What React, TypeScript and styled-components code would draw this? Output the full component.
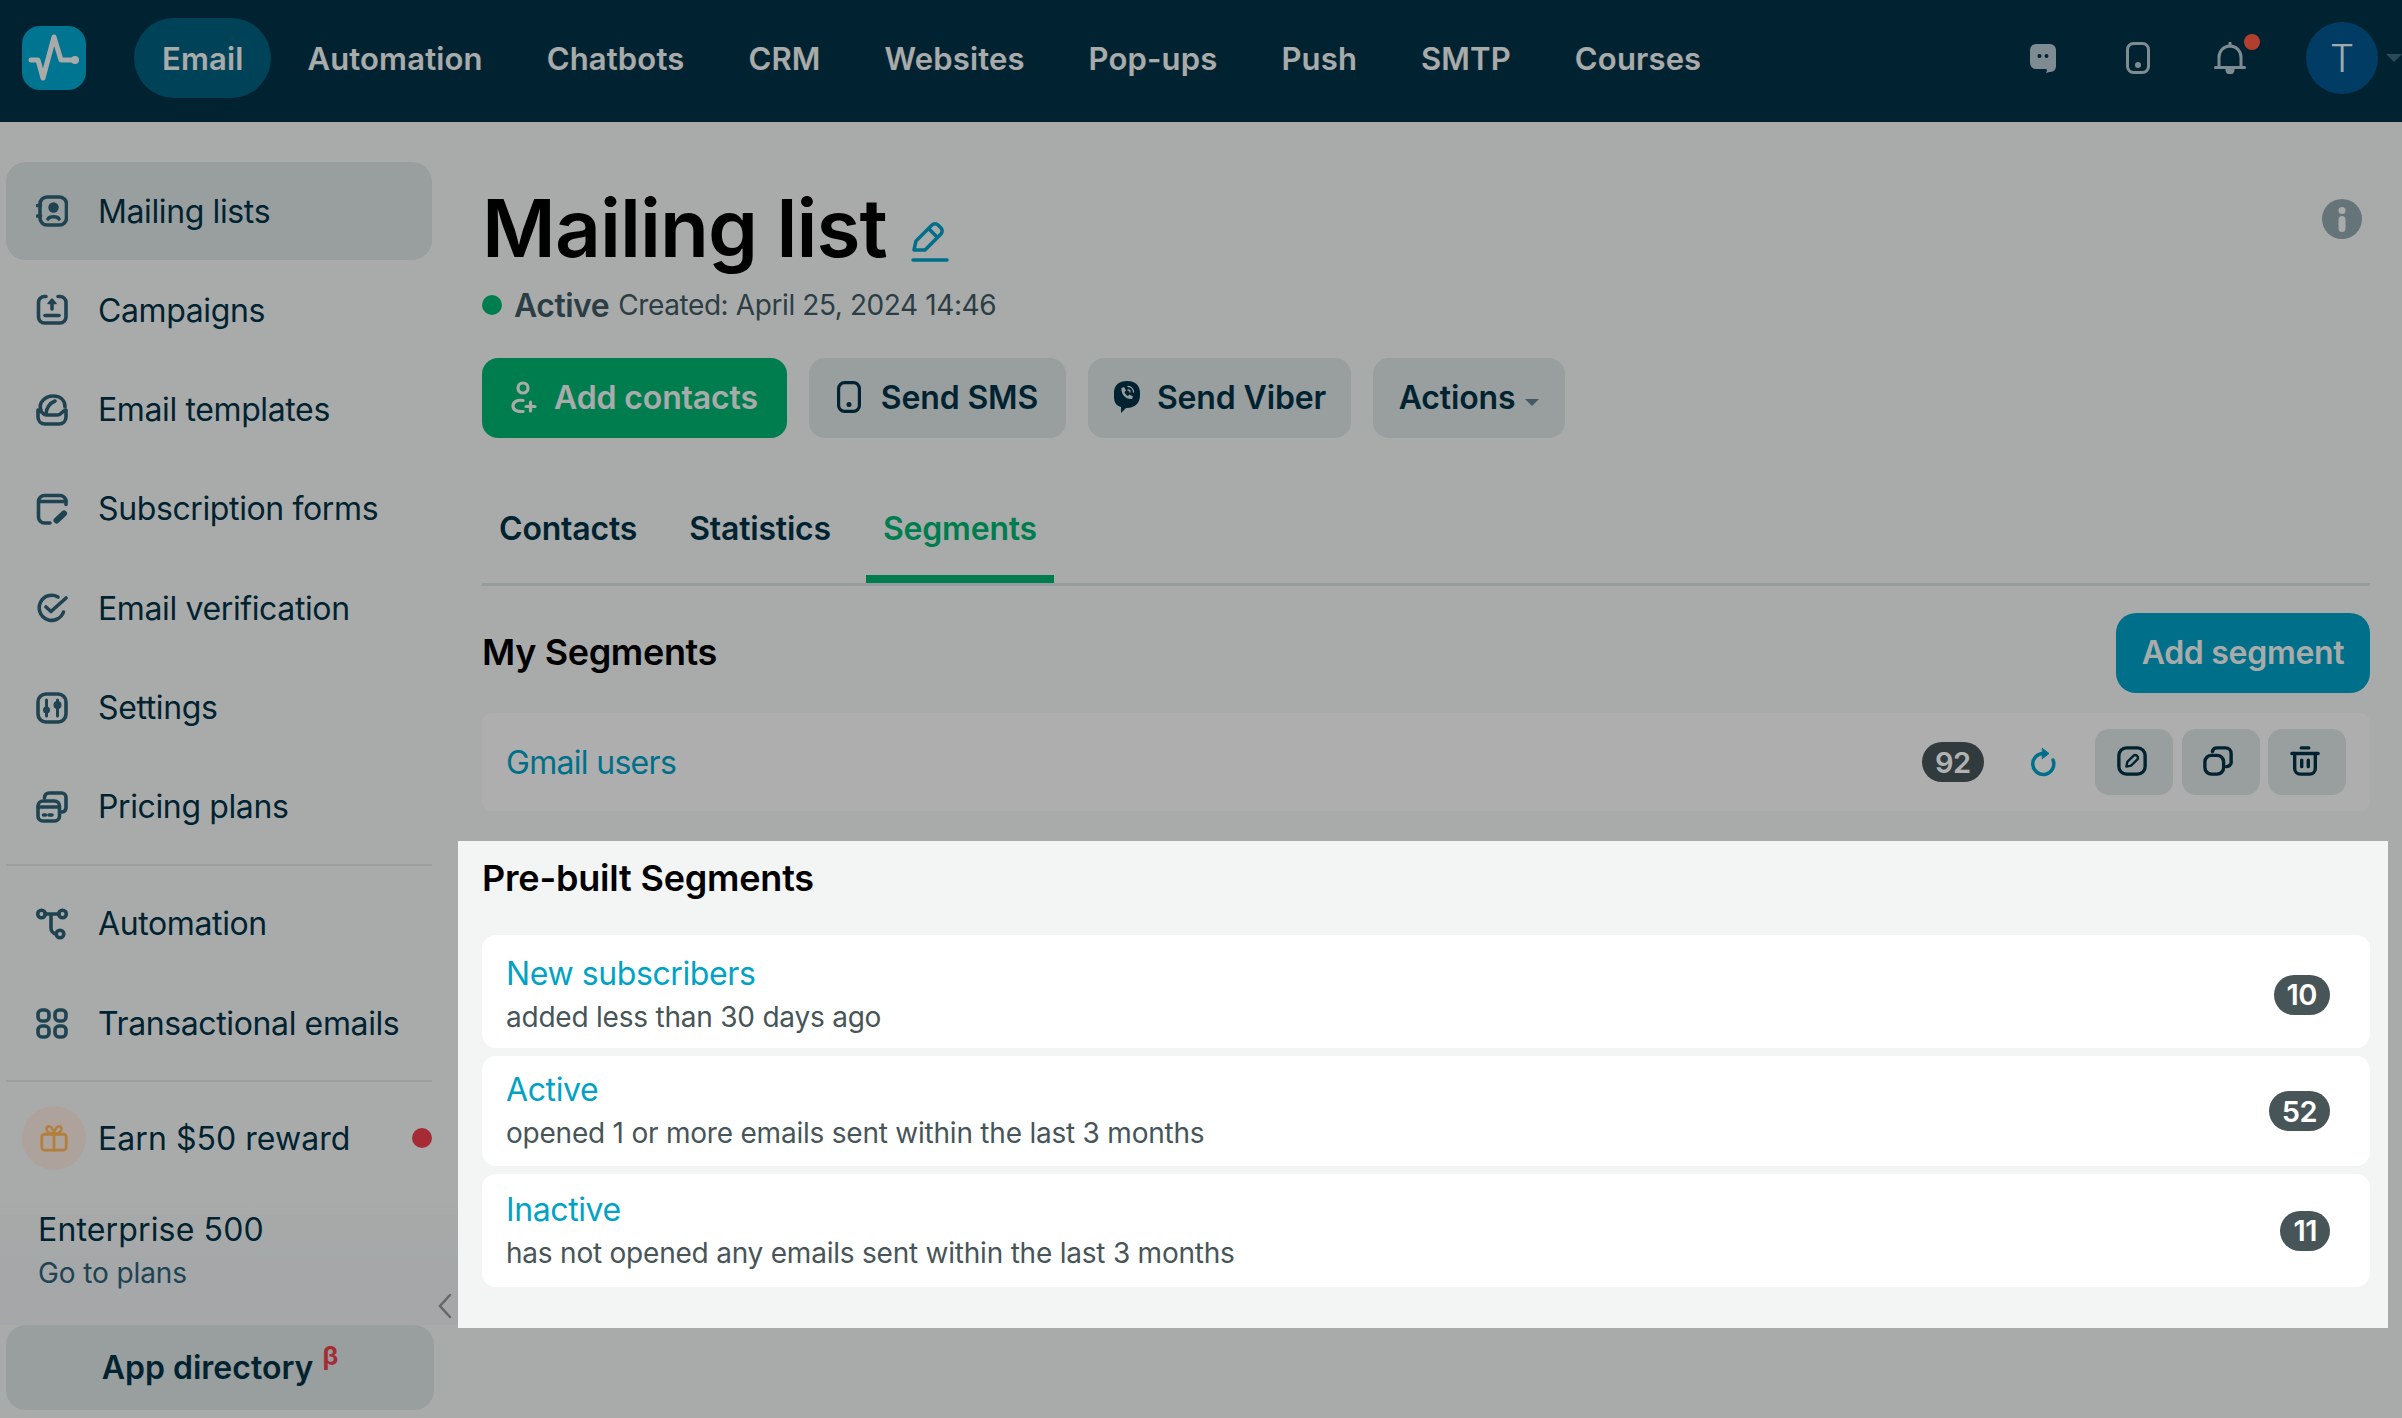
import { FC, ReactNode } from "react";
import styled, { createGlobalStyle } from "styled-components";

const GlobalStyle = createGlobalStyle`
  html, body {
    margin: 0;
    padding: 0;
    background: #f3f5f4;
    overflow: hidden;
  }
  * { box-sizing: border-box; }
  body { font-family: Inter, "Liberation Sans", sans-serif; color: #023347; }
`;

const Page = styled.div`
  width: 2402px;
  height: 1418px;
  overflow: hidden;
  position: relative;
  background: #f3f5f4;
`;

const TopBar = styled.header`
  height: 122px;
  background: #023347;
  display: flex;
  align-items: center;
  padding: 0 24px 6px 22px;
`;

const Logo = styled.div`
  width: 64px;
  height: 64px;
  border-radius: 18px;
  background: #00a8d0;
  margin-right: 48px;
  flex: none;
  svg { display: block; }
`;

const Nav = styled.nav`
  display: flex;
  gap: 8px;
  flex: 1;
`;

const NavLink = styled.a<{ $active?: boolean }>`
  height: 80px;
  padding: 0 28px;
  display: flex;
  align-items: center;
  border-radius: 40px;
  font-size: 31px;
  font-weight: 600;
  letter-spacing: 0.15px;
  color: #f3f5f4;
  background: ${(p) => (p.$active ? "#006080" : "transparent")};
`;

const TopIcons = styled.div`
  display: flex;
  align-items: center;
  color: #b6c8d1;
`;

const TopIcon = styled.span<{ $gap: number }>`
  position: relative;
  display: flex;
  margin-right: ${(p) => p.$gap}px;
`;

const NotifyDot = styled.i`
  position: absolute;
  top: -8px;
  right: -14px;
  width: 16px;
  height: 16px;
  border-radius: 50%;
  background: #ff5a42;
`;

const Avatar = styled.div`
  width: 72px;
  height: 72px;
  border-radius: 50%;
  background: #00578f;
  color: #eef2f4;
  font-size: 38px;
  font-weight: 300;
  display: flex;
  align-items: center;
  justify-content: center;
  margin-right: 8px;
`;

const Caret = styled.i`
  width: 0;
  height: 0;
  border-left: 8px solid transparent;
  border-right: 8px solid transparent;
  border-top: 8px solid #3d6b80;
  margin-right: -24px;
`;

const Body = styled.div`
  display: grid;
  grid-template-columns: 458px 1fr;
  height: 1296px;
`;

const Sidebar = styled.aside`
  position: relative;
  padding: 40px 0 0 6px;
  display: flex;
  flex-direction: column;
`;

const MenuGroup = styled.div`
  display: flex;
  flex-direction: column;
  gap: 1.33px;
  width: 426px;
`;

const MenuItem = styled.a<{ $active?: boolean }>`
  height: 98px;
  display: flex;
  align-items: center;
  gap: 30px;
  padding-left: 30px;
  border-radius: 20px;
  font-size: 32px;
  color: #023347;
  letter-spacing: -0.38px;
  background: ${(p) => (p.$active ? "#dce3e2" : "transparent")};
  svg { color: #2d6175; flex: none; }
`;

const Divider = styled.div<{ $top: number; $bottom: number }>`
  width: 426px;
  height: 2px;
  background: #dfe3e2;
  margin: ${(p) => p.$top}px 0 ${(p) => p.$bottom}px;
`;

const Reward = styled.a`
  display: flex;
  align-items: center;
  width: 426px;
  height: 64px;
  padding-left: 16px;
  margin-top: 24px;
  font-size: 32px;
  letter-spacing: 0.05px;
  color: #023347;
`;

const GiftCircle = styled.span`
  width: 64px;
  height: 64px;
  border-radius: 50%;
  background: #f9e9e0;
  color: #ffb657;
  display: flex;
  align-items: center;
  justify-content: center;
  margin-right: 12px;
`;

const RedDot = styled.i`
  width: 20px;
  height: 20px;
  border-radius: 50%;
  background: #ed3f4d;
  margin-left: auto;
`;

const PlanBox = styled.div`
  margin: 16px 0 0 -6px;
  padding: 24px 0 0 38px;
  height: 139px;
  background: linear-gradient(180deg, #f3f5f4 0%, #ecf0f2 60%);
`;

const PlanName = styled.div`
  font-size: 32px;
  letter-spacing: 0.15px;
  line-height: 40px;
  color: #023347;
`;

const PlanLink = styled.div`
  font-size: 28px;
  line-height: 40px;
  margin-top: 3px;
  letter-spacing: -0.1px;
  color: #2d6175;
`;

const Collapse = styled.span`
  position: absolute;
  right: 6px;
  top: 1171px;
  display: flex;
  color: #919593;
`;

const AppDirectory = styled.a`
  width: 428px;
  height: 85px;
  border-radius: 20px;
  background: #dce3e2;
  display: flex;
  align-items: center;
  justify-content: center;
  font-size: 32px;
  font-weight: 600;
  letter-spacing: 0;
  color: #023347;
  sup {
    color: #ed3f4d;
    font-size: 26px;
    font-weight: 700;
    margin: -24px 0 0 9px;
  }
`;

const Main = styled.main`
  padding: 58px 32px 0 24px;
  min-width: 0;
`;

const TitleRow = styled.div`
  display: flex;
  align-items: flex-start;
  height: 96px;
`;

const Title = styled.h1`
  margin: 0;
  font-size: 80px;
  line-height: 96px;
  font-weight: 600;
  letter-spacing: -0.9px;
  color: #000;
`;

const EditLink = styled.a`
  display: flex;
  color: #00a0c4;
  margin: 40px 0 0 24px;
`;

const InfoIcon = styled.span`
  margin: 19px 8px 0 auto;
  display: flex;
  color: #90a7ae;
`;

const StatusRow = styled.div`
  display: flex;
  align-items: center;
  height: 40px;
  margin-top: 9px;
  font-size: 28px;
  letter-spacing: -0.4px;
  color: #3f5a63;
`;

const StatusDot = styled.i`
  width: 20px;
  height: 20px;
  border-radius: 50%;
  background: #00b472;
  margin-right: 12px;
`;

const StatusText = styled.b`
  font-size: 32px;
  font-weight: 600;
  margin-right: 9px;
  letter-spacing: -0.5px;
`;

const ButtonRow = styled.div`
  display: flex;
  gap: 22px;
  margin-top: 33px;
`;

const Button = styled.a<{ $primary?: boolean; $w: number; $gap?: number }>`
  width: ${(p) => p.$w}px;
  height: 80px;
  padding-bottom: 2px;
  border-radius: 16px;
  display: flex;
  align-items: center;
  justify-content: center;
  gap: ${(p) => p.$gap ?? 16}px;
  font-size: 32px;
  font-weight: 600;
  letter-spacing: -0.15px;
  color: ${(p) => (p.$primary ? "#f3f5f4" : "#023347")};
  background: ${(p) => (p.$primary ? "#00b472" : "#dce3e2")};
`;

const SmallCaret = styled.i`
  width: 0;
  height: 0;
  border-left: 7px solid transparent;
  border-right: 7px solid transparent;
  border-top: 7px solid #62808c;
  margin: 10px 0 0 -6px;
`;

const Tabs = styled.div`
  display: flex;
  gap: 18px;
  height: 148px;
  padding-top: 32px;
  border-bottom: 3px solid #d7dfde;
`;

const Tab = styled.a<{ $active?: boolean }>`
  padding: 12px 17px 0;
  height: 113px;
  display: flex;
  align-items: center;
  font-size: 32px;
  font-weight: 600;
  letter-spacing: -0.2px;
  color: ${(p) => (p.$active ? "#00b472" : "#023347")};
  border-bottom: 8px solid ${(p) => (p.$active ? "#00b472" : "transparent")};
`;

const SectionHead = styled.div`
  display: flex;
  align-items: center;
  justify-content: space-between;
  height: 80px;
  margin-top: 27px;
`;

const SectionTitle = styled.h2`
  margin: 0 0 2px;
  font-size: 36px;
  font-weight: 600;
  letter-spacing: -0.35px;
  color: #000;
`;

const AddSegment = styled.a`
  width: 254px;
  height: 80px;
  padding-bottom: 2px;
  border-radius: 20px;
  background: #00a0c4;
  color: #f3f5f4;
  display: flex;
  align-items: center;
  justify-content: center;
  font-size: 32px;
  font-weight: 600;
  letter-spacing: -0.3px;
`;

const SegmentRow = styled.div`
  height: 98px;
  margin-top: 20px;
  padding: 0 24px;
  background: #fafafa;
  border-radius: 10px;
  display: flex;
  align-items: center;
`;

const SegmentLink = styled.a`
  font-size: 32px;
  letter-spacing: -0.7px;
  color: #00a0c4;
  margin-right: auto;
`;

const Count = styled.span`
  min-width: 40px;
  height: 40px;
  padding: 0 13px;
  border-radius: 20px;
  background: #475558;
  color: #fff;
  font-size: 29px;
  font-weight: 600;
  letter-spacing: -0.5px;
  display: flex;
  align-items: center;
  justify-content: center;
`;

const RefreshBtn = styled.span`
  margin: 0 31px 0 46px;
  display: flex;
  color: #00a0c4;
`;

const ActionBtn = styled.a`
  width: 78px;
  height: 66px;
  padding: 0 5px 2px 0;
  border-radius: 14px;
  background: #dce3e2;
  color: #023347;
  display: flex;
  align-items: center;
  justify-content: center;
  margin-left: 8.5px;
`;

const Prebuilt = styled.section`
  position: relative;
  width: 1930px;
  height: 487px;
  margin: 30px 0 0 -24px;
  padding: 12px 18px 0 24px;
  background: #f3f5f4;
`;

const Spotlight = styled.div`
  position: absolute;
  inset: 0;
  z-index: 10;
  pointer-events: none;
  box-shadow: 0 0 0 4000px rgba(0, 0, 0, 0.3);
`;

const PrebuiltTitle = styled(SectionTitle)`
  line-height: 50px;
  letter-spacing: -0.2px;
  margin: 0;
`;

const PrebuiltList = styled.div`
  display: flex;
  flex-direction: column;
  gap: 8px;
  margin-top: 32px;
`;

const PrebuiltRow = styled.div<{ $h: number }>`
  height: ${(p) => p.$h}px;
  background: #fff;
  border-radius: 14px;
  padding: 0 40px 0 24px;
  display: flex;
  align-items: center;
  justify-content: space-between;
  &:first-child { padding-top: 6px; }
`;

const RowName = styled.div`
  font-size: 32px;
  line-height: 42px;
  letter-spacing: -0.4px;
  color: #00a3c6;
`;

const RowDesc = styled.div`
  font-size: 28px;
  line-height: 40px;
  margin-top: 2px;
  letter-spacing: -0.22px;
  color: #475558;
`;

type IconProps = { size?: number; children: ReactNode };
const Ico: FC<IconProps> = ({ size = 32, children }) => (
  <svg width={size} height={size} viewBox="0 0 32 32" fill="none" stroke="currentColor" strokeWidth="3.6" strokeLinecap="round" strokeLinejoin="round">
    {children}
  </svg>
);

const menuTop = [
  {
    label: "Mailing lists",
    active: true,
    icon: (
      <>
        <rect x="4" y="2" width="26.500" height="28" rx="7" />
        <path d="M1.500 10.500h3M1.500 21h3" />
        <circle cx="17.500" cy="12.500" r="5.200" fill="currentColor" stroke="none" />
        <path d="M12 24c1.500-3 9.500-3 11 0" />
      </>
    ),
  },
  {
    label: "Campaigns",
    icon: (
      <>
        <path d="M10 2.500H8.500a6 6 0 0 0-6 6V23a6 6 0 0 0 6 6H24a6 6 0 0 0 6-6V8.500a6 6 0 0 0-6-6h-2" />
        <path d="M16 15V7" />
        <path d="M12 9.500L16 5l4 4.500z" fill="currentColor" strokeWidth="1.500" />
        <path d="M9 21.500h14" />
      </>
    ),
  },
  {
    label: "Email templates",
    icon: (
      <>
        <path d="M2 16v7c0 4 3 7 7 7h14c4 0 7-3 7-7v-7c-3 0-5 5-8 5H10c-3 0-5-5-8-5z" />
        <path d="M5 16C2 9 9 2 17 2c7 0 12 4 12 11" />
        <path d="M10 20c0-6 4-11 9-13" />
      </>
    ),
  },
  {
    label: "Subscription forms",
    icon: (
      <>
        <path d="M14 30H8.500a6 6 0 0 1-6-6V8.500a6 6 0 0 1 6-6H24a6 6 0 0 1 6 6v3" />
        <path d="M3 8.500h27" />
        <path d="M20.500 27.500L28 20.500" strokeWidth="6" />
      </>
    ),
  },
  {
    label: "Email verification",
    icon: (
      <>
        <path d="M22 5A12.500 12.500 0 1 0 27.500 20" />
        <path d="M10 15l5 4.500L30 6" />
      </>
    ),
  },
  {
    label: "Settings",
    icon: (
      <>
        <rect x="2" y="2" width="28" height="28" rx="8" />
        <path d="M10.500 8v16M21.500 8v16" strokeWidth="3" />
        <circle cx="10.500" cy="18" r="3.500" fill="currentColor" stroke="none" />
        <circle cx="21.500" cy="13" r="4" fill="currentColor" stroke="none" />
      </>
    ),
  },
  {
    label: "Pricing plans",
    icon: (
      <>
        <rect x="2" y="10" width="21.500" height="20" rx="5" />
        <path d="M8.500 7V6.500a4.500 4.500 0 0 1 4.500-4.500h12.500A4.500 4.500 0 0 1 30 6.500V17a4.500 4.500 0 0 1-4 4" />
        <path d="M2 16h21M7.500 24h2M13 24h3" />
      </>
    ),
  },
];

const menuBottom = [
  {
    label: "Automation",
    icon: (
      <>
        <circle cx="5.500" cy="6" r="3.800" />
        <circle cx="26.500" cy="6" r="3.800" />
        <circle cx="24" cy="26" r="3.800" />
        <path d="M9 6h14M15 6v14a6 6 0 0 0 5 6" />
      </>
    ),
  },
  {
    label: "Transactional emails",
    icon: (
      <>
        <rect x="2" y="3" width="11" height="11" rx="4" />
        <rect x="19" y="3" width="11" height="11" rx="4" />
        <rect x="2" y="19" width="11" height="11" rx="4" />
        <rect x="19" y="19" width="11" height="11" rx="4" />
      </>
    ),
  },
];

const prebuilt = [
  { name: "New subscribers", desc: "added less than 30 days ago", count: 10, h: 113 },
  { name: "Active", desc: "opened 1 or more emails sent within the last 3 months", count: 52, h: 110 },
  { name: "Inactive", desc: "has not opened any emails sent within the last 3 months", count: 11, h: 113 },
];

const navItems = ["Automation", "Chatbots", "CRM", "Websites", "Pop-ups", "Push", "SMTP", "Courses"];

export default function App() {
  return (
    <Page>
      <GlobalStyle />
      <TopBar>
        <Logo>
          <svg width="64" height="64" viewBox="0 0 64 64" fill="none" stroke="#f3f5f4" strokeWidth="5" strokeLinejoin="round" strokeLinecap="round">
            <path d="M9 34h7l5 18 11-41 7 23h13" />
            <circle cx="53" cy="34" r="4" fill="#f3f5f4" stroke="none" />
          </svg>
        </Logo>
        <Nav>
          <NavLink $active>Email</NavLink>
          {navItems.map((n) => (
            <NavLink key={n}>{n}</NavLink>
          ))}
        </Nav>
        <TopIcons>
          <TopIcon $gap={70}>
            <svg width="26" height="30" viewBox="0 0 26 30">
              <path d="M6 1h14a6 6 0 0 1 6 6v16c0 3-2 6-6 6-1 0-2 .5-4 1 1-1 1-3 .5-4H6a6 6 0 0 1-6-6V7a6 6 0 0 1 6-6z" fill="currentColor" />
              <circle cx="9.500" cy="13" r="2" fill="#023347" />
              <circle cx="16.500" cy="13" r="2" fill="#023347" />
            </svg>
          </TopIcon>
          <TopIcon $gap={64}>
            <svg width="24" height="32" viewBox="0 0 24 32" fill="none" stroke="currentColor" strokeWidth="3">
              <rect x="1.500" y="1.500" width="21" height="29" rx="6" />
              <circle cx="12" cy="23" r="3" fill="currentColor" stroke="none" />
            </svg>
          </TopIcon>
          <TopIcon $gap={60}>
            <svg width="32" height="32" viewBox="0 0 32 32" fill="none" stroke="currentColor" strokeWidth="3" strokeLinecap="round">
              <path d="M5 25V15a11 11 0 0 1 22 0v10" />
              <path d="M1.500 25.500h29M16 1v3" />
              <path d="M13 28h6a3 3 0 0 1-6 0z" fill="currentColor" />
            </svg>
            <NotifyDot />
          </TopIcon>
          <Avatar>T</Avatar>
          <Caret />
        </TopIcons>
      </TopBar>
      <Body>
        <Sidebar>
          <MenuGroup>
            {menuTop.map((m) => (
              <MenuItem key={m.label} $active={m.active}>
                <Ico>{m.icon}</Ico>
                {m.label}
              </MenuItem>
            ))}
          </MenuGroup>
          <Divider $top={8} $bottom={9} />
          <MenuGroup>
            {menuBottom.map((m) => (
              <MenuItem key={m.label}>
                <Ico>{m.icon}</Ico>
                {m.label}
              </MenuItem>
            ))}
          </MenuGroup>
          <Divider $top={8} $bottom={0} />
          <Reward>
            <GiftCircle>
              <Ico size={30}>
                <rect x="3" y="12" width="26" height="17" rx="3" strokeWidth="3" />
                <path d="M16 12v17" strokeWidth="3" />
                <path d="M16 11c-3 0-8 0-8-5 0-4 6-4 8 5zM16 11c3 0 8 0 8-5 0-4-6-4-8 5z" strokeWidth="2.500" />
              </Ico>
            </GiftCircle>
            Earn $50 reward
            <RedDot />
          </Reward>
          <PlanBox>
            <PlanName>Enterprise 500</PlanName>
            <PlanLink>Go to plans</PlanLink>
          </PlanBox>
          <AppDirectory>
            App directory<sup>β</sup>
          </AppDirectory>
          <Collapse>
            <svg width="14" height="26" viewBox="0 0 14 26" fill="none" stroke="currentColor" strokeWidth="2.500" strokeLinecap="round">
              <path d="M12 2L2 13l10 11" />
            </svg>
          </Collapse>
        </Sidebar>
        <Main>
          <TitleRow>
            <Title>Mailing list</Title>
            <EditLink>
              <svg width="38" height="42" viewBox="0 0 38 42" fill="none" stroke="currentColor" strokeWidth="3.500" strokeLinecap="round" strokeLinejoin="round">
                <path d="M3 30l2-9L21 5a4.500 4.500 0 0 1 6 0l3 3a4.500 4.500 0 0 1 0 6L14 30z" />
                <path d="M18 9l8 8" />
                <path d="M2 40h34" />
              </svg>
            </EditLink>
            <InfoIcon>
              <svg width="40" height="40" viewBox="0 0 40 40">
                <circle cx="20" cy="20" r="20" fill="currentColor" />
                <circle cx="20" cy="11.500" r="3.500" fill="#f3f5f4" />
                <rect x="16.500" y="17" width="7" height="16" rx="3.500" fill="#f3f5f4" />
              </svg>
            </InfoIcon>
          </TitleRow>
          <StatusRow>
            <StatusDot />
            <StatusText>Active</StatusText>
            Created: April 25, 2024 14:46
          </StatusRow>
          <ButtonRow>
            <Button $primary $w={305} $gap={17}>
              <svg width="26" height="32" viewBox="0 0 26 32" fill="none" stroke="currentColor" strokeWidth="3.200" strokeLinecap="round">
                <circle cx="12" cy="7" r="5" />
                <path d="M12 19.500C6 18.500 2 21 2 25c0 4 4 6 10 5.500" />
                <path d="M15 25.500h9M19.500 21v9" />
              </svg>
              Add contacts
            </Button>
            <Button $w={257} $gap={20}>
              <svg width="24" height="32" viewBox="0 0 24 32" fill="none" stroke="currentColor" strokeWidth="3.200">
                <rect x="1.600" y="1.600" width="20.800" height="28.800" rx="6" />
                <circle cx="12" cy="23.500" r="2.500" fill="currentColor" stroke="none" />
              </svg>
              Send SMS
            </Button>
            <Button $w={263}>
              <svg width="28" height="34" viewBox="0 0 28 34">
                <path d="M14 1C6 1 1 5 1 13v4c0 6 3 9 7 10v6l5-5h1c8 0 13-5 13-13v-2C27 5 22 1 14 1z" fill="currentColor" />
                <path d="M8.500 8l2.500-1 2 3.500-1.500 1.500c.5 2 2 3.500 3.500 4l1.500-1.500 3.500 2-1 2.500c-5.500 1-11.500-5-10.500-11z" fill="#dce3e2" />
                <path d="M15 6.500c3 0 5.500 2.500 5.500 5.500M15 10c1.200 0 2 .8 2 2" fill="none" stroke="#dce3e2" strokeWidth="1.300" strokeLinecap="round" />
              </svg>
              Send Viber
            </Button>
            <Button $w={192}>
              Actions
              <SmallCaret />
            </Button>
          </ButtonRow>
          <Tabs>
            <Tab>Contacts</Tab>
            <Tab>Statistics</Tab>
            <Tab $active>Segments</Tab>
          </Tabs>
          <SectionHead>
            <SectionTitle>My Segments</SectionTitle>
            <AddSegment>Add segment</AddSegment>
          </SectionHead>
          <SegmentRow>
            <SegmentLink>Gmail users</SegmentLink>
            <Count>92</Count>
            <RefreshBtn>
              <svg width="26" height="30" viewBox="0 0 26 30" fill="none" stroke="currentColor" strokeWidth="3.500" strokeLinecap="round">
                <path d="M14 6.500A10.500 10.500 0 1 0 23 13" />
                <path d="M12.500 1.500L19 6.500l-6.500 5z" fill="currentColor" strokeWidth="1" strokeLinejoin="round" />
              </svg>
            </RefreshBtn>
            <ActionBtn>
              <Ico size={30}>
                <rect x="2" y="2" width="28" height="28" rx="8" />
                <path d="M10 22l1-5 7-7a3 3 0 0 1 4 4l-7 7z" strokeWidth="2.500" />
              </Ico>
            </ActionBtn>
            <ActionBtn>
              <Ico size={30}>
                <rect x="2" y="10" width="20" height="20" rx="7" />
                <path d="M10 6a5 5 0 0 1 5-4h9a6 6 0 0 1 6 6v8a5 5 0 0 1-5 6" />
              </Ico>
            </ActionBtn>
            <ActionBtn>
              <Ico size={30}>
                <path d="M2 8h28M12 2h8" />
                <path d="M5 8v16a6 6 0 0 0 6 6h10a6 6 0 0 0 6-6V8" />
                <path d="M12.500 15v7M19.500 15v7" />
              </Ico>
            </ActionBtn>
          </SegmentRow>
          <Prebuilt>
            <Spotlight />
            <PrebuiltTitle>Pre-built Segments</PrebuiltTitle>
            <PrebuiltList>
              {prebuilt.map((r) => (
                <PrebuiltRow key={r.name} $h={r.h}>
                  <div>
                    <RowName>{r.name}</RowName>
                    <RowDesc>{r.desc}</RowDesc>
                  </div>
                  <Count>{r.count}</Count>
                </PrebuiltRow>
              ))}
            </PrebuiltList>
          </Prebuilt>
        </Main>
      </Body>
    </Page>
  );
}
